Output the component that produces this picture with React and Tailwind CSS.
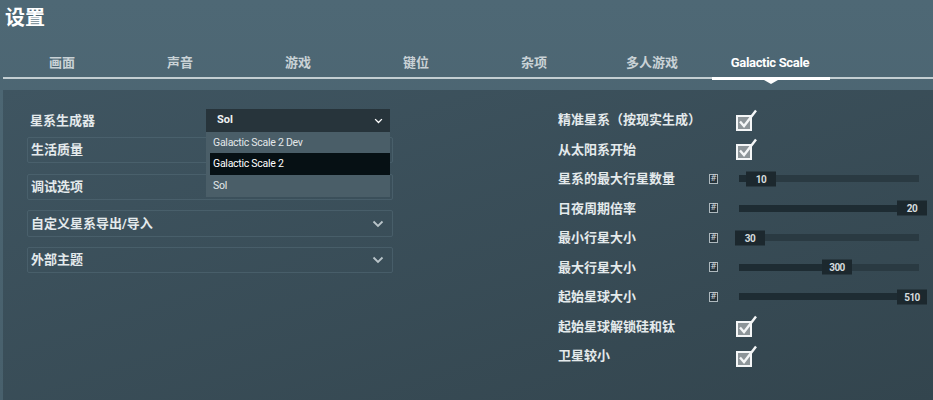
import React from "react";

const tabs = ["画面", "声音", "游戏", "键位", "杂项", "多人游戏", "Galactic Scale"];

const rightRows = [
  { type: "check", label: "精准星系（按现实生成）" },
  { type: "check", label: "从太阳系开始" },
  { type: "slider", label: "星系的最大行星数量", value: "10", left: 11 },
  { type: "slider", label: "日夜周期倍率", value: "20", left: 162 },
  { type: "slider", label: "最小行星大小", value: "30", left: 0 },
  { type: "slider", label: "最大行星大小", value: "300", left: 87 },
  { type: "slider", label: "起始星球大小", value: "510", left: 162 },
  { type: "check", label: "起始星球解锁硅和钛" },
  { type: "check", label: "卫星较小" },
];

function Chevron({ className }) {
  return (
    <svg viewBox="0 0 12 8" className={className} fill="none">
      <path d="M1.5 1.5 L6 6 L10.5 1.5" stroke="currentColor" strokeWidth="1.8" />
    </svg>
  );
}

function CheckBox() {
  return (
    <svg width="22" height="22" viewBox="0 0 22 22" className="ml-[1px]">
      <rect x="1" y="7" width="14" height="14" fill="#8d9599" stroke="#f4f6f7" strokeWidth="2" />
      <path d="M4 12.5 L8 17 L20 1.5" fill="none" stroke="#f4f6f7" strokeWidth="2.4" />
    </svg>
  );
}

function HashIcon() {
  return (
    <div className="w-[9px] h-[10px] border border-[#aeb9be] bg-[#26343b] flex items-center justify-center text-[8px] leading-none font-normal text-[#d8dee0] font-['DejaVu_Sans',sans-serif]">
      #
    </div>
  );
}

function Slider({ value, left }) {
  return (
    <div className="relative w-[192px] h-full flex items-center">
      <div className="ml-[4px] w-[180px] h-[7px] bg-[#2a3a42]">
        <div className="h-full bg-[#1e2c33]" style={{ width: left + 15 }} />
      </div>
      <div
        className="absolute top-1/2 -translate-y-1/2 w-[30px] h-[15px] bg-[#1c282e] flex items-center justify-center text-[10px] text-[#d6dcde] tracking-tighter"
        style={{ left }}
      >
        {value}
      </div>
    </div>
  );
}

function Box({ children, className = "" }) {
  return (
    <div
      className={
        "h-[26px] flex items-center justify-between pl-[3px] pr-[8px] border border-[#566e7a80] rounded-[2px] " +
        className
      }
    >
      {children}
    </div>
  );
}

export default function App() {
  return (
    <div className="w-full h-[400px] overflow-hidden flex flex-col bg-gradient-to-b from-[#4e6875] to-[#48606c] font-['Roboto','Noto_Sans_CJK_SC',sans-serif] text-[#e4eaec]">
      {/* header */}
      <div className="h-[44px] pl-[5px] pt-[5px] text-[20px] font-bold leading-[26px] text-white">设置</div>

      {/* tabs */}
      <div className="ml-[3px] h-[35px] flex border-b-2 border-[#c3ced2]">
        {tabs.map((t, i) => {
          const active = i === tabs.length - 1;
          return (
            <div
              key={t}
              className={
                "relative w-[118px] flex items-end justify-center pb-[5px] text-[13px] font-bold leading-[18px] " +
                (active ? "text-white tracking-tight" : "text-[#c9d2d6]")
              }
            >
              {t}
              {active && (
                <div className="absolute left-[1px] right-[-1px] bottom-[-3px] h-[3px] bg-white">
                  <div className="absolute left-1/2 -translate-x-1/2 top-[3px] w-0 h-0 border-l-[7px] border-r-[7px] border-t-[4px] border-l-transparent border-r-transparent border-t-white" />
                </div>
              )}
            </div>
          );
        })}
      </div>

      {/* panel */}
      <div className="ml-[3px] mt-[11px] flex-1 flex bg-gradient-to-br from-[#3f5561] to-[#33454e]">
        {/* left column */}
        <div className="ml-[24px] w-[366px] pt-[19px] text-[13px] font-bold">
          <div className="h-[23px] flex items-center">
            <div className="w-[179px] pl-[3px] pt-[1px]">星系生成器</div>
            <div className="relative w-[184px] h-full bg-[#27343b] flex items-center justify-between pl-[11px] pr-[7px] font-bold text-[11px] text-[#eef2f3]">
              Sol
              <Chevron className="w-[9px] h-[6px] text-white" />
              <div className="absolute left-0 top-full w-[184px] z-10 bg-[#4a5e68] text-[10.5px] font-normal tracking-tight text-[#e3e8ea]">
                <div className="h-[21px] flex items-center pl-[7px]">Galactic Scale 2 Dev</div>
                <div className="h-[22px] ml-[4px] flex items-center pl-[3px] bg-[#061014] text-white">Galactic Scale 2</div>
                <div className="h-[22px] flex items-center pl-[7px]">Sol</div>
              </div>
            </div>
          </div>
          <Box className="mt-[5px]">生活质量</Box>
          <Box className="mt-[11px]">调试选项</Box>
          <Box className="mt-[10px] h-[27px]">
            自定义星系导出/导入
            <Chevron className="w-[12px] h-[8px] text-[#b9c4c9]" />
          </Box>
          <Box className="mt-[10px]">
            外部主题
            <Chevron className="w-[12px] h-[8px] text-[#b9c4c9]" />
          </Box>
        </div>

        {/* right column */}
        <div className="ml-[165px] pt-[15px] text-[13px] font-bold">
          {rightRows.map((r) => (
            <div key={r.label} className="h-[29.5px] flex items-center">
              {r.type === "check" ? (
                <>
                  <div className="w-[177px]">{r.label}</div>
                  <CheckBox />
                </>
              ) : (
                <>
                  <div className="w-[151px]">{r.label}</div>
                  <div className="w-[26px]">
                    <HashIcon />
                  </div>
                  <Slider value={r.value} left={r.left} />
                </>
              )}
            </div>
          ))}
        </div>
      </div>
    </div>
  );
}
